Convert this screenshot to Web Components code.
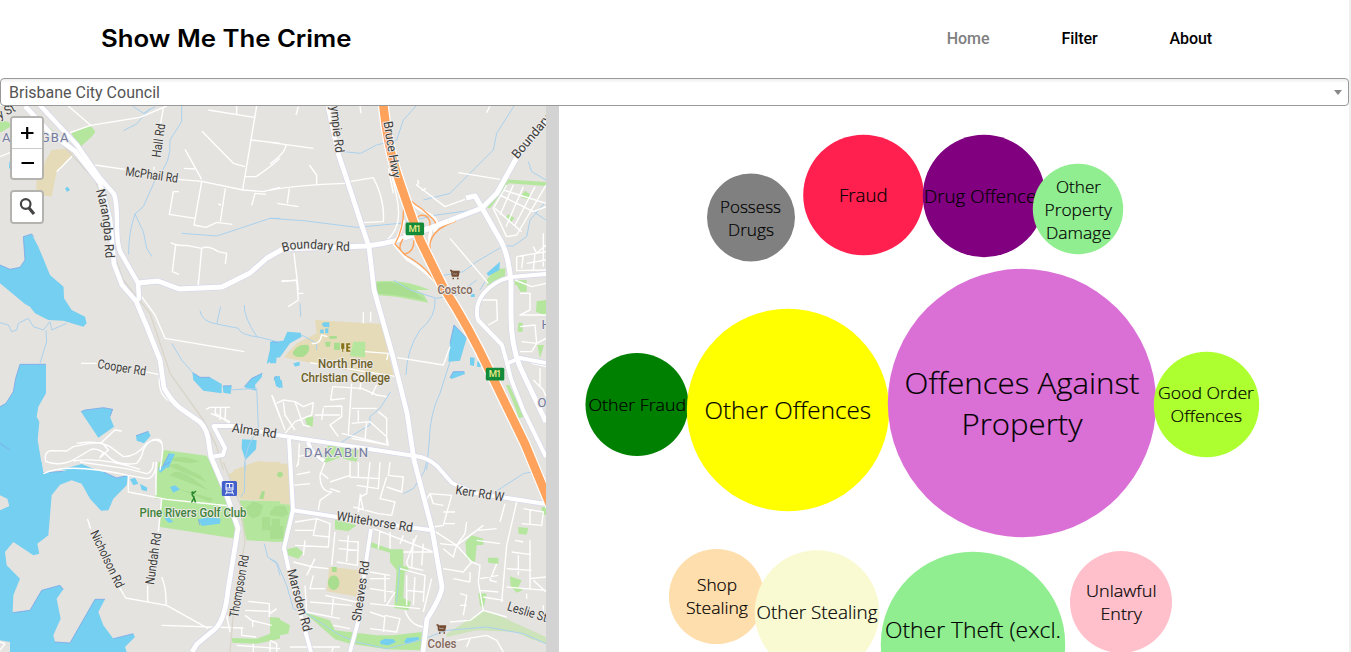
<!DOCTYPE html>
<html lang="en">
<head>
<meta charset="utf-8">
<title>Show Me The Crime</title>
<style>
html,body{margin:0;height:100%;overflow:hidden;background:#fff}
body{font-family:Roboto,"Liberation Sans",sans-serif}
</style>
</head>
<body>
<crime-app></crime-app>
<script>
const define=(name,html)=>customElements.define(name,class extends HTMLElement{
  constructor(){super();this.attachShadow({mode:'open'}).innerHTML=html;}
});

define('site-header',`<style>
:host{display:flex;box-sizing:border-box;height:78px;padding:0 137px 0 101px;align-items:center;justify-content:space-between;background:#fff}
svg{display:block;overflow:visible}
text{font:600 23.6px Inter,"Open Sans",sans-serif;fill:#000}
nav{display:flex;gap:72px}
</style>
<svg width="251" height="30"><text x="0" y="23" textLength="250.5" lengthAdjust="spacingAndGlyphs">Show Me The Crime</text></svg>
<nav><slot></slot></nav>`);

define('nav-link',`<style>
:host{display:block;font:500 16px/20px Roboto,sans-serif;color:#000;letter-spacing:-.08px}
:host([active]){color:#808080}
</style><slot></slot>`);

define('council-select',`<style>
:host{display:flex;box-sizing:border-box;width:1349px;height:28px;border:1px solid #999;border-radius:4px;padding:1px 6px 0 8px;align-items:center;justify-content:space-between;color:#555;font:16px/26px Roboto,sans-serif;background:linear-gradient(#eee 0,#fff 4px)}
i{border:4.5px solid transparent;border-top:5px solid #888;border-bottom:0}
</style><span><slot></slot></span><i></i>`);

define('map-controls',`<style>
:host{display:flex;flex-direction:column;gap:10px;width:34px}
div{border:2px solid #b4b3b0;border-radius:4px;background:#fff;overflow:hidden}
button{display:block;width:30px;height:30px;padding:0;border:0;background:#fff}
button+button{border-top:1px solid #ccc;height:30px}
svg{display:block}
</style>
<div><button aria-label="Zoom in"><svg width="30" height="30"><path d="M9 15H21.5M15.2 9V21" stroke="#000" stroke-width="2.2"/></svg></button>
<button aria-label="Zoom out"><svg width="30" height="30"><path d="M9.5 14H22" stroke="#000" stroke-width="2.2"/></svg></button></div>
<div><button aria-label="Search"><svg width="30" height="30" fill="none" stroke="#444"><circle cx="13.7" cy="12" r="4.8" stroke-width="2.2"/><path d="M17 16L22 22" stroke-width="3.2"/></svg></button></div>`);

/* Map geometry is held in 3x tiles; each tile is placed by its origin. */
const origin={a:[0,100],b:[270,100],c:[0,280],d:[270,280],e:[0,462],f:[270,462]};
const layers=[
['sand',{
a:'M155 150L215 145L220 160L170 215L155 290L108 282L110 240L125 232L135 185Z',
c:'M700 570L775 543L840 550V600H700Z',
d:'M135 120L335 132L372 290L280 280L120 248L42 232L80 190L140 160ZM0 548L55 552V580H0Z',
e:'M686 36L775 0H840V120L720 112Z',
f:'M0 5L55 8L62 130L0 120ZM178 315L272 325L264 404L170 388Z'}],
['green',{
a:'M0 62L25 65L35 78L0 98ZM145 82L160 92L150 96ZM215 100L260 80L275 80L286 95L275 110L240 142L228 130Z',
b:'M318 545Q400 535 480 570H318ZM650 322L712 238L828 246V258L715 250L660 325ZM755 285L765 272L783 285L774 298L756 293ZM705 355L715 343L733 353L724 367ZM650 540L675 508L706 505L705 530L665 550L652 560ZM733 540H768V570H748Z',
c:'M492 510L620 527L650 580H478Z',
d:'M318 5Q360 -2 410 15L460 42L475 68L380 50L320 45ZM750 0H770V35H750ZM734 0H750V15H734ZM800 64L828 60V108L798 95ZM745 128H758V155H743ZM802 195H822L810 235ZM708 315L718 315L762 410L746 415L735 380ZM105 412L130 410L128 440L110 435ZM158 530L175 495L240 500L266 510L260 545L235 540L210 532L165 550ZM250 185L286 185L285 232L240 228Z',
e:'M475 0H630L705 155L710 230L480 195L485 110H465ZM720 115L840 118V240L740 235L720 160ZM695 528L770 530L810 515L820 465L840 468V530L770 545L697 542Z',
f:'M0 120L65 130L45 240L0 238ZM50 262L80 255L100 272L85 290L50 278ZM195 172L260 190L235 208L195 202ZM302 240L362 262H400V312L417 315L414 328L404 330L400 408L423 420L415 445L373 438L380 325L360 300V272L302 255ZM586 240L605 220L640 230V248L620 250L615 300L590 290ZM653 287H685V306L655 302ZM745 195L775 198L770 218L745 215ZM720 343L755 355L745 375L758 385L740 392L722 373ZM625 393L650 395L640 440L630 430ZM0 465L25 470L60 490L55 515L0 525ZM100 450L180 475L195 505L320 520L370 520L455 510V565L350 562L240 545L195 532L130 475ZM815 135H828V160L815 155Z'}],
['green2',{
c:'M500 540Q540 520 600 545L570 550Z',
d:'M68 220Q80 190 115 195Q125 215 100 230Q75 235 68 220ZM165 185L182 185L180 200L168 200ZM192 188H210V210H192ZM178 168H200V176H178ZM165 505L185 510L170 530ZM320 10Q360 0 410 18L465 60L380 46L320 40Z',
e:'M510 40Q530 10 600 65L625 85ZM500 10L530 5L600 40L620 60ZM535 80L640 110L630 120ZM740 135L760 118L790 130L780 160L760 170L740 155ZM785 88L795 88L790 112L778 110ZM787 165H810V205H785ZM815 170H840V210H815Z',
f:'M0 150L15 132H45L55 155L40 165L0 160ZM0 192H40V230H0ZM22 35A8 8 0 0 0 38 40A8 8 0 0 0 22 35ZM175 355A17 22 0 1 0 207 355A17 22 0 0 0 175 355ZM185 315H200V330H187ZM682 475L695 475V492L683 490Z'}],
['park',{f:'M530 515L600 470L640 445L690 462L828 525V545L780 530L740 510L620 505L530 525Z'}],
['water',{
a:'M0 495L30 508L60 502L75 480L70 410L95 402L115 440L150 525L190 560V600H100L30 570L0 548ZM28 185L40 180V210L27 205ZM195 265L203 260L210 270L201 276Z',
b:'M650 520L690 485L688 510L655 528Z',
c:'M0 0H165L190 20L192 55L215 90L255 110L260 130L250 140L190 122L145 120L105 100L90 80L75 72L0 10ZM60 253H138V340L115 380L110 410L118 425L113 480L128 570H0V380L18 370L40 335L47 295ZM0 490L30 510L35 545L5 560L0 570ZM243 395L255 390L310 383L338 388L330 410L342 440L295 473ZM408 467L445 454L452 467L432 490L410 482ZM577 277L600 292L630 292L665 312V340L610 332L580 300ZM668 318L695 317L692 342L670 338ZM733 320L755 295L787 280L785 292L765 315L768 332L740 325ZM815 185L840 188V225L800 252ZM822 290L840 288V325L828 318ZM726 478L770 480L768 508L736 540L725 505ZM180 570L245 552L290 570ZM490 555L508 520L525 522L505 565Z',
d:'M0 185L40 182L52 155L92 158L95 170L60 190L30 232L0 236ZM0 235L20 235L18 250H0ZM12 298L20 288L36 302L38 325L20 318ZM155 132L162 127H178V142L160 140ZM150 150L160 148L162 160H151ZM165 146L175 145V160H166ZM70 250L88 245L90 256L75 260ZM535 245L540 190L552 135L590 175L570 242ZM600 232L614 233L612 258L600 255ZM622 244L634 246L632 262L621 260ZM540 293L550 275L583 275L585 282L545 297ZM603 42H614V51H603Z',
e:'M0 0H125L130 32L190 28L240 10L310 30L350 48L385 40L380 70L340 110L325 145L303 146L270 110L245 65L215 55L180 68L155 100L145 220L112 245L118 275L100 280L40 240L15 270L20 310L60 350L40 400L38 452L90 445L125 385L180 370L190 382L170 410L182 470L160 520L165 540L210 543L285 412L315 412L295 450L310 490L340 530L400 515L405 525L375 555L380 570H30V540L0 535ZM390 52L405 47L415 65L400 70ZM420 65L442 77L440 88L425 84ZM475 20L510 0L505 12L480 33ZM510 75L525 70L540 82L520 92ZM595 172L630 165L662 170L660 185L605 192ZM492 150L520 180L505 182L495 170Z',
f:'M330 538L345 530L370 532L378 540L355 550L332 547ZM402 540L410 528L445 525L448 532L412 546Z'}],
['shore',{
a:'M0 495L30 508L60 502L75 480L70 410L95 402L102 410',
c:'M0 380L18 370L40 335L47 295L60 253H138M243 395L255 390L310 383L338 388L330 410M0 490L30 510M577 277L600 292L630 292M668 318L695 317M733 320L755 295L787 280M815 185L840 188M408 467L445 454M490 555L508 520',
d:'M12 298L20 288M540 190L552 135L590 175M540 293L550 275L583 275',
e:'M38 452L90 445L125 385L180 370L190 382M165 540L210 543L285 412L315 412M340 530L400 515M130 32L190 28M310 30L350 48L385 40M475 20L510 0M595 172L600 190'}],
['bay',{e:'M0 100L22 110L28 132L0 145Z'}],
['stream',{
a:'M398 18L430 40L465 20M370 92L410 72L450 25M545 18V65L510 120Q515 190 470 230L430 320L405 342Q385 400 386 464M405 342L430 395L440 445L456 470M545 400L650 408L720 385L810 355H840',
b:'M0 355L100 362L260 382L390 370L500 345L610 330M220 155L272 160L320 135L380 120L400 60L438 18M732 18L680 100L670 150L600 220L540 280L460 300M775 185L785 215L828 240M828 305L780 360L770 410L730 438H700L620 485L580 515L500 530M630 570L645 545M828 360L790 335',
c:'M0 128L25 135L35 155L50 150L55 130L85 115L100 140L130 150L150 125L155 150L200 130M138 150L140 185L120 250M600 92Q605 125 650 132L715 145Q720 165 780 172L840 187M662 80L650 132M733 75Q730 110 772 172M515 190L545 240L580 280M690 330L770 325L775 440L745 500L735 540V570',
d:'M90 70L92 110M370 0L420 30L500 55L530 50M620 0L580 30L550 52M495 55Q500 110 450 150Q410 210 408 285M540 245L510 340Q480 400 478 480L470 570M362 335L330 385L300 410V435L240 470L210 490M95 165L140 190V210',
e:'M735 0L733 90L722 105M793 245L803 285L830 305L840 340',
f:'M0 290L20 300L50 370L70 440L110 455L210 520L260 540L350 560L450 535L530 505L650 495L760 515L828 545M470 0L462 30L430 80L400 95M675 90L760 35L785 30M390 310L380 420'}],
['minor',{
a:'M0 170L30 158M205 18L272 76L210 98M272 76L420 52L500 18M490 25L480 80M462 200V210M285 195L375 208M535 238L605 244L730 270L790 275L840 262M625 30L767 53M710 18V42M770 18L728 270M606 94L700 190L735 200M555 148L605 238M552 205L585 207M755 120L840 130M735 230H768Q800 210 840 175M605 245L582 375L618 382L650 367L697 373M537 275H520L508 343L585 355M676 265L661 365M655 312L663 315M755 316L765 280L798 283M512 428Q530 438 560 436L605 445Q625 435 655 455L680 460L676 492M527 435L517 515L537 523M605 445L595 555M170 215L220 165',
b:'M85 20L78 45M270 18L273 40M660 18L650 38M0 127L130 145M47 135Q50 155 0 192M0 270Q80 255 225 250M118 195L140 225V252M58 265L52 310M22 310L85 320M240 245L310 233Q345 300 340 365L280 368M355 180L380 290Q400 380 350 420M355 205L370 280M565 218L690 238M442 240Q450 248 440 255L525 320L585 298M455 272L468 265M540 415L655 550M710 255L670 325L710 410L740 405L828 255M690 285L790 335L828 320M700 270L828 310M730 255L690 345M760 260L708 380M795 260L735 375M675 325L755 395M72 460L85 570M35 542H80M740 470L828 455M740 470V512L828 510M760 465L755 505M795 460L790 510M820 400V500M770 490L828 480M790 440L800 460L828 435',
c:'M425 50L465 105L495 175L733 215M595 0V15M243 250H290M435 275L475 283M480 285Q470 340 510 365M618 388L630 382H690M647 382L645 400L690 430M662 382L660 420M677 382L675 420M632 400L690 425M817 347L840 410M365 453L345 450L305 487L325 510L300 533L310 518M305 487Q260 490 220 500L200 513L150 512Q130 520 138 545Q180 560 220 540L270 510Q290 500 320 525Q350 560 410 550Q425 535 430 510Q450 470 480 480Q495 490 480 570M230 490Q290 480 330 500L370 530Q410 530 440 490Q470 470 485 490M220 543Q300 530 420 568',
d:'M80 0L85 60L55 80M35 5L80 0M85 40H100M280 95V130M302 95V125M125 190Q150 195 155 165L172 170M285 215L355 220L350 240M382 233L520 255L540 200M120 248L380 290M5 345L45 450M20 370L40 360L75 365L100 380L130 368L125 405L75 425L45 460M75 365L100 435L120 440M40 365L45 405L75 450M135 405H210M160 380L215 378V410L180 435L205 470M160 385L155 420M245 310L235 465M188 320L275 325L320 345L350 350M188 320L182 360L225 355M320 315L305 345M275 280L270 330M245 385H320M245 430L300 425L350 470L355 495L215 460M325 395L350 415V490M245 475L355 495M265 390V425M290 425L285 480M0 460L20 465M88 490L85 555M125 520L85 530M735 0L785 20L828 10M750 40H780V90L750 105H828M755 185L800 190L828 175M750 140L795 135L800 190L785 215H750M630 60H680L682 120L655 135M785 250L828 260M790 300L820 330L828 350M810 265V320',
e:'M262 170L272 200M355 370L377 408L500 430L625 500M443 418V370M485 345Q500 380 498 430M485 110L475 210M130 35Q200 0 385 40L440 50Q465 50 470 0M385 40V90L500 112L690 132M240 0L380 20L440 35Q460 30 460 0M468 0V100M485 490L730 498M680 460L690 510M745 418L808 425V465M735 445L812 448M735 460L755 475L815 490M725 498V520L768 525M758 475V495M710 550L840 560M760 545V570M810 540V570M0 540L15 545L0 565',
f:'M80 38L120 30M85 0L80 15M70 70L120 65M165 0L150 40Q150 90 185 90L150 115L145 145M240 0V45L330 50M300 0L290 95L270 105L265 150M265 0V45M330 0L325 80L260 70M360 0L355 40L400 45L395 90L350 75M350 45L330 110L375 120L365 160L325 155M250 135L325 155M180 80L210 90M175 50L150 30M240 40L180 60M280 145L270 95M75 180L140 170L180 185L175 255L75 250M140 170L130 220L180 225M75 205H130M105 235L100 280M195 210L185 310M205 235L265 240L262 310L200 300M205 260L265 265M235 220L230 300M110 340L135 290M70 300L130 315L175 320M130 340L120 380H165M105 370L110 450L210 470M165 400L260 420M120 420L245 430M190 410L185 460M190 490L240 500M310 200L490 270M330 205L325 260M360 210V260M400 220L390 245M440 220L410 300L415 315L460 325M430 230L425 315M460 245L455 310M400 270H490M390 320L465 340L460 420M410 340V430M300 330L360 340M300 350H360M300 380L370 390M345 340V420M300 425L450 440M375 390L350 430M435 345L430 430M410 385L460 390M485 350L460 450M345 460L340 510M345 460L390 470L380 510L300 500M405 445Q420 490 460 495M300 450L345 465M465 120L480 95L545 100L520 190L490 195M480 95L490 125L520 130M520 150H555M520 185H555M490 205L560 250L605 300M510 245L560 250L585 215M520 260L550 285L560 250L640 190M585 215L590 180M625 205L680 200M620 235L690 245M605 300L630 310L625 360L640 445M605 300L580 330L520 320M550 350L600 360M600 330V360M680 305L660 355L680 360M630 350L685 340M630 385L685 390M640 405L700 415M740 120L710 250L695 420M760 140L820 150L815 190L755 185M780 145V185M705 125L690 180M725 270L783 278M735 235L760 240M745 280V340M780 235V380M710 320L785 325M780 350L828 345M710 375L828 385M790 355L828 390M770 395V410M820 430V455M540 480L600 475L640 445L710 465M570 395L590 400L580 460M570 430H590M560 535L650 520L680 535L700 570M600 530L590 555M0 455L20 440M60 555H210M0 535L20 545V570M190 555L185 570'}],
['rail',{
a:'M80 18L285 240L310 300L345 470L380 570',c:'M370 0L450 100L510 280L610 420L650 500L670 570',e:'M670 0L722 130L735 240L705 400L690 570'}]
];
const colors={sand:'#e5dbb8',green:'#b5e69e',green2:'#a9dd90',park:'#cde4bb',water:'#75cff0',bay:'#e5e3df'};
const tiles=layers.map(([kind,set])=>Object.entries(set).map(([t,d])=>{
 const line={stream:['#a9d1ee',3],minor:['#fff',4.2],rail:['#d9d5ca',4],shore:['#7ba6e8',2.4]}[kind];
 const style=line?`fill="none" stroke="${line[0]}" stroke-width="${line[1]}"`:`fill="${colors[kind]}"`;
 return `<path transform="translate(${origin[t]}) scale(.33333)" d="${d}" ${style}/>`}).join('')).join('');
const roads=[
['M25 106L50 133L75 151L100 183L110 220L114 264L122 285L136 301L147 327L160 360L164 388Q172 402 180 408L200 422Q208 430 209 445L211 457L225 490L238 528L235 547L228 590Q225 620 215 629L197 644L192 652',4.8],
['M37 102L77 145L100 178L114 194Q117 202 117 225T122 255L138 283L139 298L136 302',4.5],
['M138 283L158 281L179 289L222 287L250 273L267 258L283 249L367 246Q397 243 430 228L482 208L497 193L517 157L546 120',5],
['M328 106L338 153L348 183L360 220L369 247L374 290L393 357L407 413L414 460L432 529L442 587Q441 597 427 619L423 652',4.8],
['M466 198L475 196L482 208L502 243Q509 258 511 283L511 315Q511 345 520 367L546 422',5],
['M546 274L511 277Q494 281 484 293T478 320L502 345L507 363L511 379L524 412L546 457',4],
['M506 364L520 358L546 363',4],
['M211 457L223 455L225 448L213.5 426L234 426L277 435L415 456Q427 457 437 466L452 483L475 493L546 504',4],
['M289 439L293 510L284 548L291 580L311 652',4],
['M308 442L311 450L324 461',4],
['M292 510L337 517L430 530',4],
['M371 529L366 562L358 622L350 652',3.8]
];
const main=roads.map(([d,w])=>`<path d="${d}" fill="none" stroke="#d6d8ea" stroke-width="${w+1.4}"/>`).join('')+roads.map(([d,w])=>`<path d="${d}" fill="none" stroke="#fff" stroke-width="${w}"/>`).join('');
const spin=(s,x,y,a,l)=>`<text transform="translate(${x} ${y}) rotate(${a})" textLength="${l}" lengthAdjust="spacingAndGlyphs">${s}</text>`;
const flat=(s,x,y,l,c)=>`<text x="${x}" y="${y}" textLength="${l}" lengthAdjust="spacingAndGlyphs" style="fill:${c};font-size:12px;font-weight:500">${s}</text>`;
const area=(s,x,y,l)=>`<text x="${x}" y="${y}" textLength="${l}" style="fill:#737ba3;font-size:13px">${s}</text>`;
const shield=(x,y)=>`<g transform="translate(${x} ${y})"><rect width="18.5" height="12.6" rx="1.5" fill="#118b3a"/><text x="3" y="9.6" textLength="12.5" style="font:500 9.5px Roboto,sans-serif;fill:#e9e884;stroke:none">M1</text></g>`;
const cart=(x,y)=>`<path transform="translate(${x} ${y})" d="M0 .5H1.5L2.5 6H8L9 1.5H2V5H8V3H3M2.5 8.5H4M7 8.5H8.5" fill="none" stroke="#754c34" stroke-width="1.5"/>`;

define('street-map',`<style>
:host{display:block;position:relative;overflow:hidden;background:#e5e3df}
svg{display:block}
map-controls{position:absolute;left:10px;top:10px}
text{font:12.8px Roboto,"Liberation Sans",sans-serif;fill:#3b3b3b;stroke:#ebeae7;stroke-width:2px;paint-order:stroke;stroke-linejoin:round}
</style>
<svg width="546" height="546" viewBox="0 106 546 546" stroke-linejoin="round">
${tiles}
${main}
<g fill="none" stroke="#fff" stroke-width="3"><path d="M401 181Q407 204 425 212T434 232M404 220Q398 240 394 244L407 259Q425 270 440 286M431 229Q427 250 432 268"/></g>
<g fill="none" stroke="#ffa35c" stroke-width="1.4"><path d="M402 187Q407 200 422 209L433 219Q437 223 436 227M403 196Q406 225 395 244L405 255Q422 264 432 277L440 288M416 222Q417 213 426 216Q434 223 426 231M403 239Q396 249 405 254Q414 252 414 240M456 221Q432 229 430 244V258L434 270"/></g>
<path d="M383 102Q387 144 397 174T420 240L443 287Q469 327 491 374L525 444L551 507" fill="none" stroke="#fff" stroke-width="11"/>
<path d="M383 102Q387 144 397 174T420 240L443 287Q469 327 491 374L525 444L551 507" fill="none" stroke="#ffa35c" stroke-width="8.6"/>
<path d="M404 236L430 228L455 219" fill="none" stroke="#fff" stroke-width="5"/>
<defs><path id="nar" d="M96 190Q103 215 104 235T106 262"/><path id="bou" d="M283 252Q300 247 317 249T351 251"/></defs>
<text textLength="69" lengthAdjust="spacingAndGlyphs"><textPath href="#nar">Narangba Rd</textPath></text>
<text textLength="67" lengthAdjust="spacingAndGlyphs"><textPath href="#bou">Boundary Rd</textPath></text>
${spin('Hall Rd',160.5,158,-82,34)}${spin('McPhail Rd',125,175.5,8,53)}${spin('ympie Rd',330.5,106.5,84,47)}
${spin('Bruce Hwy',383.5,122,81,57)}${spin('Boundary',517.5,159.5,-50,53)}${spin('ky St',-5,122,-28,24)}
${spin('Cooper Rd',97,368,9,49)}${spin('Alma Rd',231.5,432,8,45)}${spin('Nicholson Rd',90,533,64.5,62)}
${spin('Nundah Rd',154,585,-82,52)}${spin('Thompson Rd',238,618,-80,63)}${spin('Whitehorse Rd',336,520,9,77)}
${spin('Kerr Rd W',455,494,9,49)}${spin('Marsden Rd',287,570.5,75,64)}${spin('Sheaves Rd',360.5,622,-81.5,61)}${spin('Leslie St',506.5,610,17,41)}
${area('NARANGBA',-8.5,142,77)}${area('DAKABIN',304,457,64)}
${area('H',541.5,329,9)}${area('O',537.5,407,9)}
${flat('North Pine',318,367.5,55,'#6f6027')}${flat('Christian College',301,382,89,'#6f6027')}
${flat('Pine Rivers Golf Club',139.5,516.5,107,'#40823a')}${flat('Costco',437.5,293.5,35,'#85695c')}${flat('Coles',427.5,647.5,29,'#85695c')}
${shield(405.6,222.6)}${shield(485.8,367.8)}
${cart(450,270)}${cart(436.5,624.5)}
<path d="M341 343H344.5V349H343.5V352H342V349H341ZM346 343H350.5V345H348.5V346.5H350.5V348.5H348.5V350H350.5V352H346Z" fill="#857117" stroke="#f5efd8" stroke-width=".4"/>
<circle cx="192.5" cy="492.5" r="1.2" fill="#27862a"/><path d="M196 491L192 494.5L194 498L191.5 502.5M193.5 496L195.5 502.5" stroke="#27862a" stroke-width="1.5" fill="none"/>
<rect x="221.8" y="481" width="15.2" height="15" rx="1.5" fill="#4360cc"/><path d="M226 483.5H233V490H226ZM226 488H233M229.5 483.5V488M227 491L225.5 494.5M232 491L233.5 494.5M226 492.8H233" fill="none" stroke="#fff" stroke-width="1"/>
</svg><map-controls></map-controls>`);

/* label lines: [text, x, baseline, width, font size] */
const bubbles=[
[751,217.5,44,'#808080',[['Possess',720,213,61,17],['Drugs',728,236,46,17]]],
[863.5,195,60.3,'#ff2050',[['Fraud',839,202,48.5,18.5]]],
[984,196,61.2,'#800080',[['Drug Offences',924,203,121,18.5]]],
[1078,209,45.2,'#90ee90',[['Other',1056,193,45,17],['Property',1044.5,216,67.5,17],['Damage',1046,239,65,17]]],
[637,404.5,51.5,'#008000',[['Other Fraud',588.5,411,97.5,17]]],
[788,410,101.2,'#ffff00',[['Other Offences',704.5,418.5,166.5,24]]],
[1022,403,134.2,'#da70d6',[['Offences Against',904.5,394,235,30],['Property',961.5,435,121,30]]],
[1206.5,404.5,52.7,'#adff2f',[['Good Order',1158,399,96,17],['Offences',1170.5,422,71.5,17]]],
[716.5,596.5,47.6,'#ffdead',[['Shop',697,591,40,17],['Stealing',686,614,62,17]]],
[817,612.5,62.3,'#fafad2',[['Other Stealing',756.5,619,121,18.5]]],
[973,644,92.2,'#90ee90',[['Other Theft (excl.',885,638,176,22.5],['Unlawful Entry)',896.5,668.2,153,22.5]]],
[1121,602,51,'#ffc0cb',[['Unlawful',1086,597,70.5,17],['Entry',1100.5,620,41.5,17]]]
];
define('bubble-chart',`<style>
:host{display:block;overflow:hidden;background:#fff}
svg{display:block}
text{font-family:"Open Sans","Noto Sans",sans-serif;font-weight:300;fill:#000;stroke:#000;stroke-width:.2px}
</style>
<svg width="790" height="546" viewBox="559 106 790 546">${bubbles.map(([x,y,r,c,ls])=>`<g><circle cx="${x}" cy="${y}" r="${r}" fill="${c}"/>${ls.map(([s,a,b,w,z])=>`<text x="${a}" y="${b}" textLength="${w}" lengthAdjust="spacingAndGlyphs" font-size="${z}">${s}</text>`).join('')}</g>`).join('')}</svg>`);

define('crime-app',`<style>
:host{display:block;box-sizing:border-box;width:1351px;height:652px;overflow:hidden;border-right:2px solid #f0f0f0;background:#fff}
main{display:grid;grid-template-columns:546px 13px 1fr;height:546px}
.bar{background:#d3d3d3}
</style>
<site-header><nav-link active>Home</nav-link><nav-link>Filter</nav-link><nav-link>About</nav-link></site-header>
<council-select>Brisbane City Council</council-select>
<main><street-map></street-map><div class="bar"></div><bubble-chart></bubble-chart></main>`);
</script>
</body>
</html>
